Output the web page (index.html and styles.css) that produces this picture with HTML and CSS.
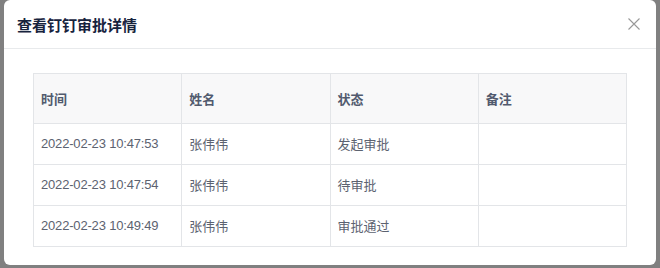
FILE: index.html
```html
<!DOCTYPE html>
<html lang="zh-CN">
<head>
	<meta charset="UTF-8">
	<title>钉钉审批详情</title>
	<link rel="stylesheet" href="styles.css">
</head>
<body>

	<div class="backdrop">
		<div class="modal">
			<div class="modal-header">
				<span class="modal-title">查看钉钉审批详情</span>
				<a class="modal-close" title="关闭">
					<svg width="12" height="12" viewBox="0 0 12 12">
						<path d="M0.5 0.5 L11.5 11.5 M11.5 0.5 L0.5 11.5" stroke="#999" stroke-width="1.1" fill="none"/>
					</svg>
				</a>
			</div>
			<div class="modal-body">
				<table class="approve-table">
					<thead>
						<tr>
							<th>时间</th>
							<th>姓名</th>
							<th>状态</th>
							<th>备注</th>
						</tr>
					</thead>
					<tbody>
						<tr>
							<td class="time">2022-02-23 10:47:53</td>
							<td>张伟伟</td>
							<td>发起审批</td>
							<td></td>
						</tr>
						<tr>
							<td class="time">2022-02-23 10:47:54</td>
							<td>张伟伟</td>
							<td>待审批</td>
							<td></td>
						</tr>
						<tr>
							<td class="time">2022-02-23 10:49:49</td>
							<td>张伟伟</td>
							<td>审批通过</td>
							<td></td>
						</tr>
					</tbody>
				</table>
			</div>
		</div>
	</div>

</body>
</html>
```

FILE: styles.css
```css
html, body {
	margin: 0;
	padding: 0;
	height: 100%;
}
body {
	background: #808080;
	font-family: "Liberation Sans", "Noto Sans CJK SC", sans-serif;
	overflow: hidden;
}
.backdrop {
	padding: 0 4px 0 4px;
}
.modal {
	background: #fff;
	border-radius: 6px;
	width: 652px;
	height: 265px;
	box-sizing: border-box;
}
.modal-header {
	align-items: center;
	border-bottom: 1px solid #e8eaec;
	display: flex;
	height: 48px;
	justify-content: space-between;
	padding: 0 16px 0 13px;
}
.modal-title {
	color: #17233d;
	font-family: "Noto Sans CJK SC", sans-serif;
	font-size: 15px;
	font-weight: bold;
}
.modal-close {
	cursor: pointer;
	display: flex;
	height: 12px;
	width: 12px;
}
.modal-body {
	padding: 24px 29px 23px 29px;
}
.approve-table {
	border-collapse: collapse;
	color: #5c6270;
	font-size: 13px;
	table-layout: fixed;
	width: 594px;
}
.approve-table th,
.approve-table td {
	border: 1px solid #e3e5e8;
	padding: 0 7px;
	text-align: left;
}
.approve-table th {
	background: #f8f8f9;
	color: #515a6e;
	font-weight: bold;
	height: 49px;
}
.approve-table td {
	height: 39px;
	padding-bottom: 1px;
}
.approve-table td.time {
	letter-spacing: -0.18px;
}
```
